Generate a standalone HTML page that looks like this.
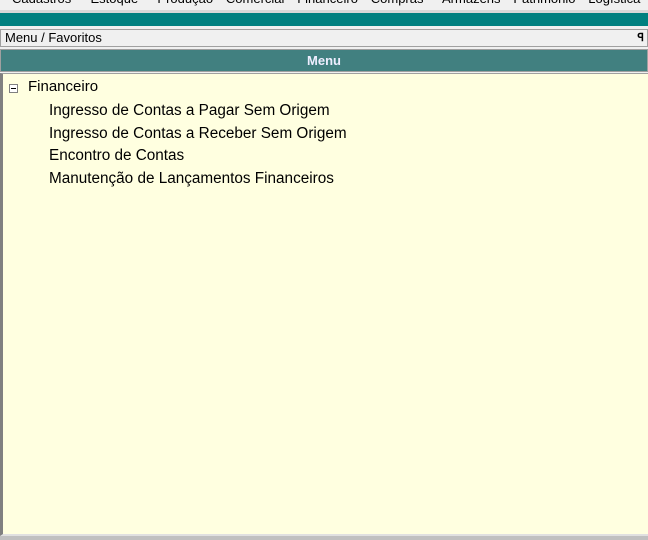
<!DOCTYPE html><html><head><style>
body{margin:0;width:648px;height:540px;overflow:hidden;background:#f0f0f0;font-family:"Liberation Sans",Arial,sans-serif;position:relative}
div{position:absolute;box-sizing:border-box}
</style></head><body>
<div style="left:0;top:-9px;width:648px;height:20px;font-size:13px;white-space:nowrap;padding-left:12px;color:#000;word-spacing:2.8px">Cadastros &nbsp; Estoque &nbsp; Produção &nbsp;Comercial &nbsp;Financeiro &nbsp;Compras &nbsp; Armazéns &nbsp;Patrimônio &nbsp;Logística</div>
<div style="left:0;top:10px;width:648px;height:3px;background:#d8d8d8"></div>
<div style="left:0;top:13px;width:648px;height:13px;background:#008080"></div>
<div style="left:0;top:29px;width:648px;height:18px;background:#f0f0f0;border:1px solid #a0a0a0;font-size:13px;line-height:16px;padding-left:4px">Menu / Favoritos<span style="position:absolute;right:3px;top:0;font-weight:bold;font-size:11px">ꟼ</span></div>
<div style="left:0;top:49px;width:648px;height:23px;background:#418080;border:1px solid #a0a0a0;color:#eef;font-weight:bold;font-size:13px;text-align:center;line-height:21px">Menu</div>
<div style="left:0;top:73px;width:648px;height:463px;background:#ffffe0;border-left:3px solid #808080;border-top:1px solid #a0a0a0;border-bottom:2px solid #e0e0e0"></div>
<div style="left:0;top:536px;width:648px;height:4px;background:#c0c0c0"></div>
<div style="left:9px;top:84px;width:9px;height:9px;border:1px solid #808080;background:#fff"><div style="left:1px;top:3px;width:5px;height:1px;background:#000"></div></div>
<div style="left:28px;top:78px;font-size:15px;line-height:18px">Financeiro</div>
<div style="left:49px;top:100px;font-size:15.3px;line-height:22.7px;white-space:nowrap">Ingresso de Contas a Pagar Sem Origem<br>Ingresso de Contas a Receber Sem Origem<br>Encontro de Contas<br>Manutenção de Lançamentos Financeiros</div>
</body></html>
